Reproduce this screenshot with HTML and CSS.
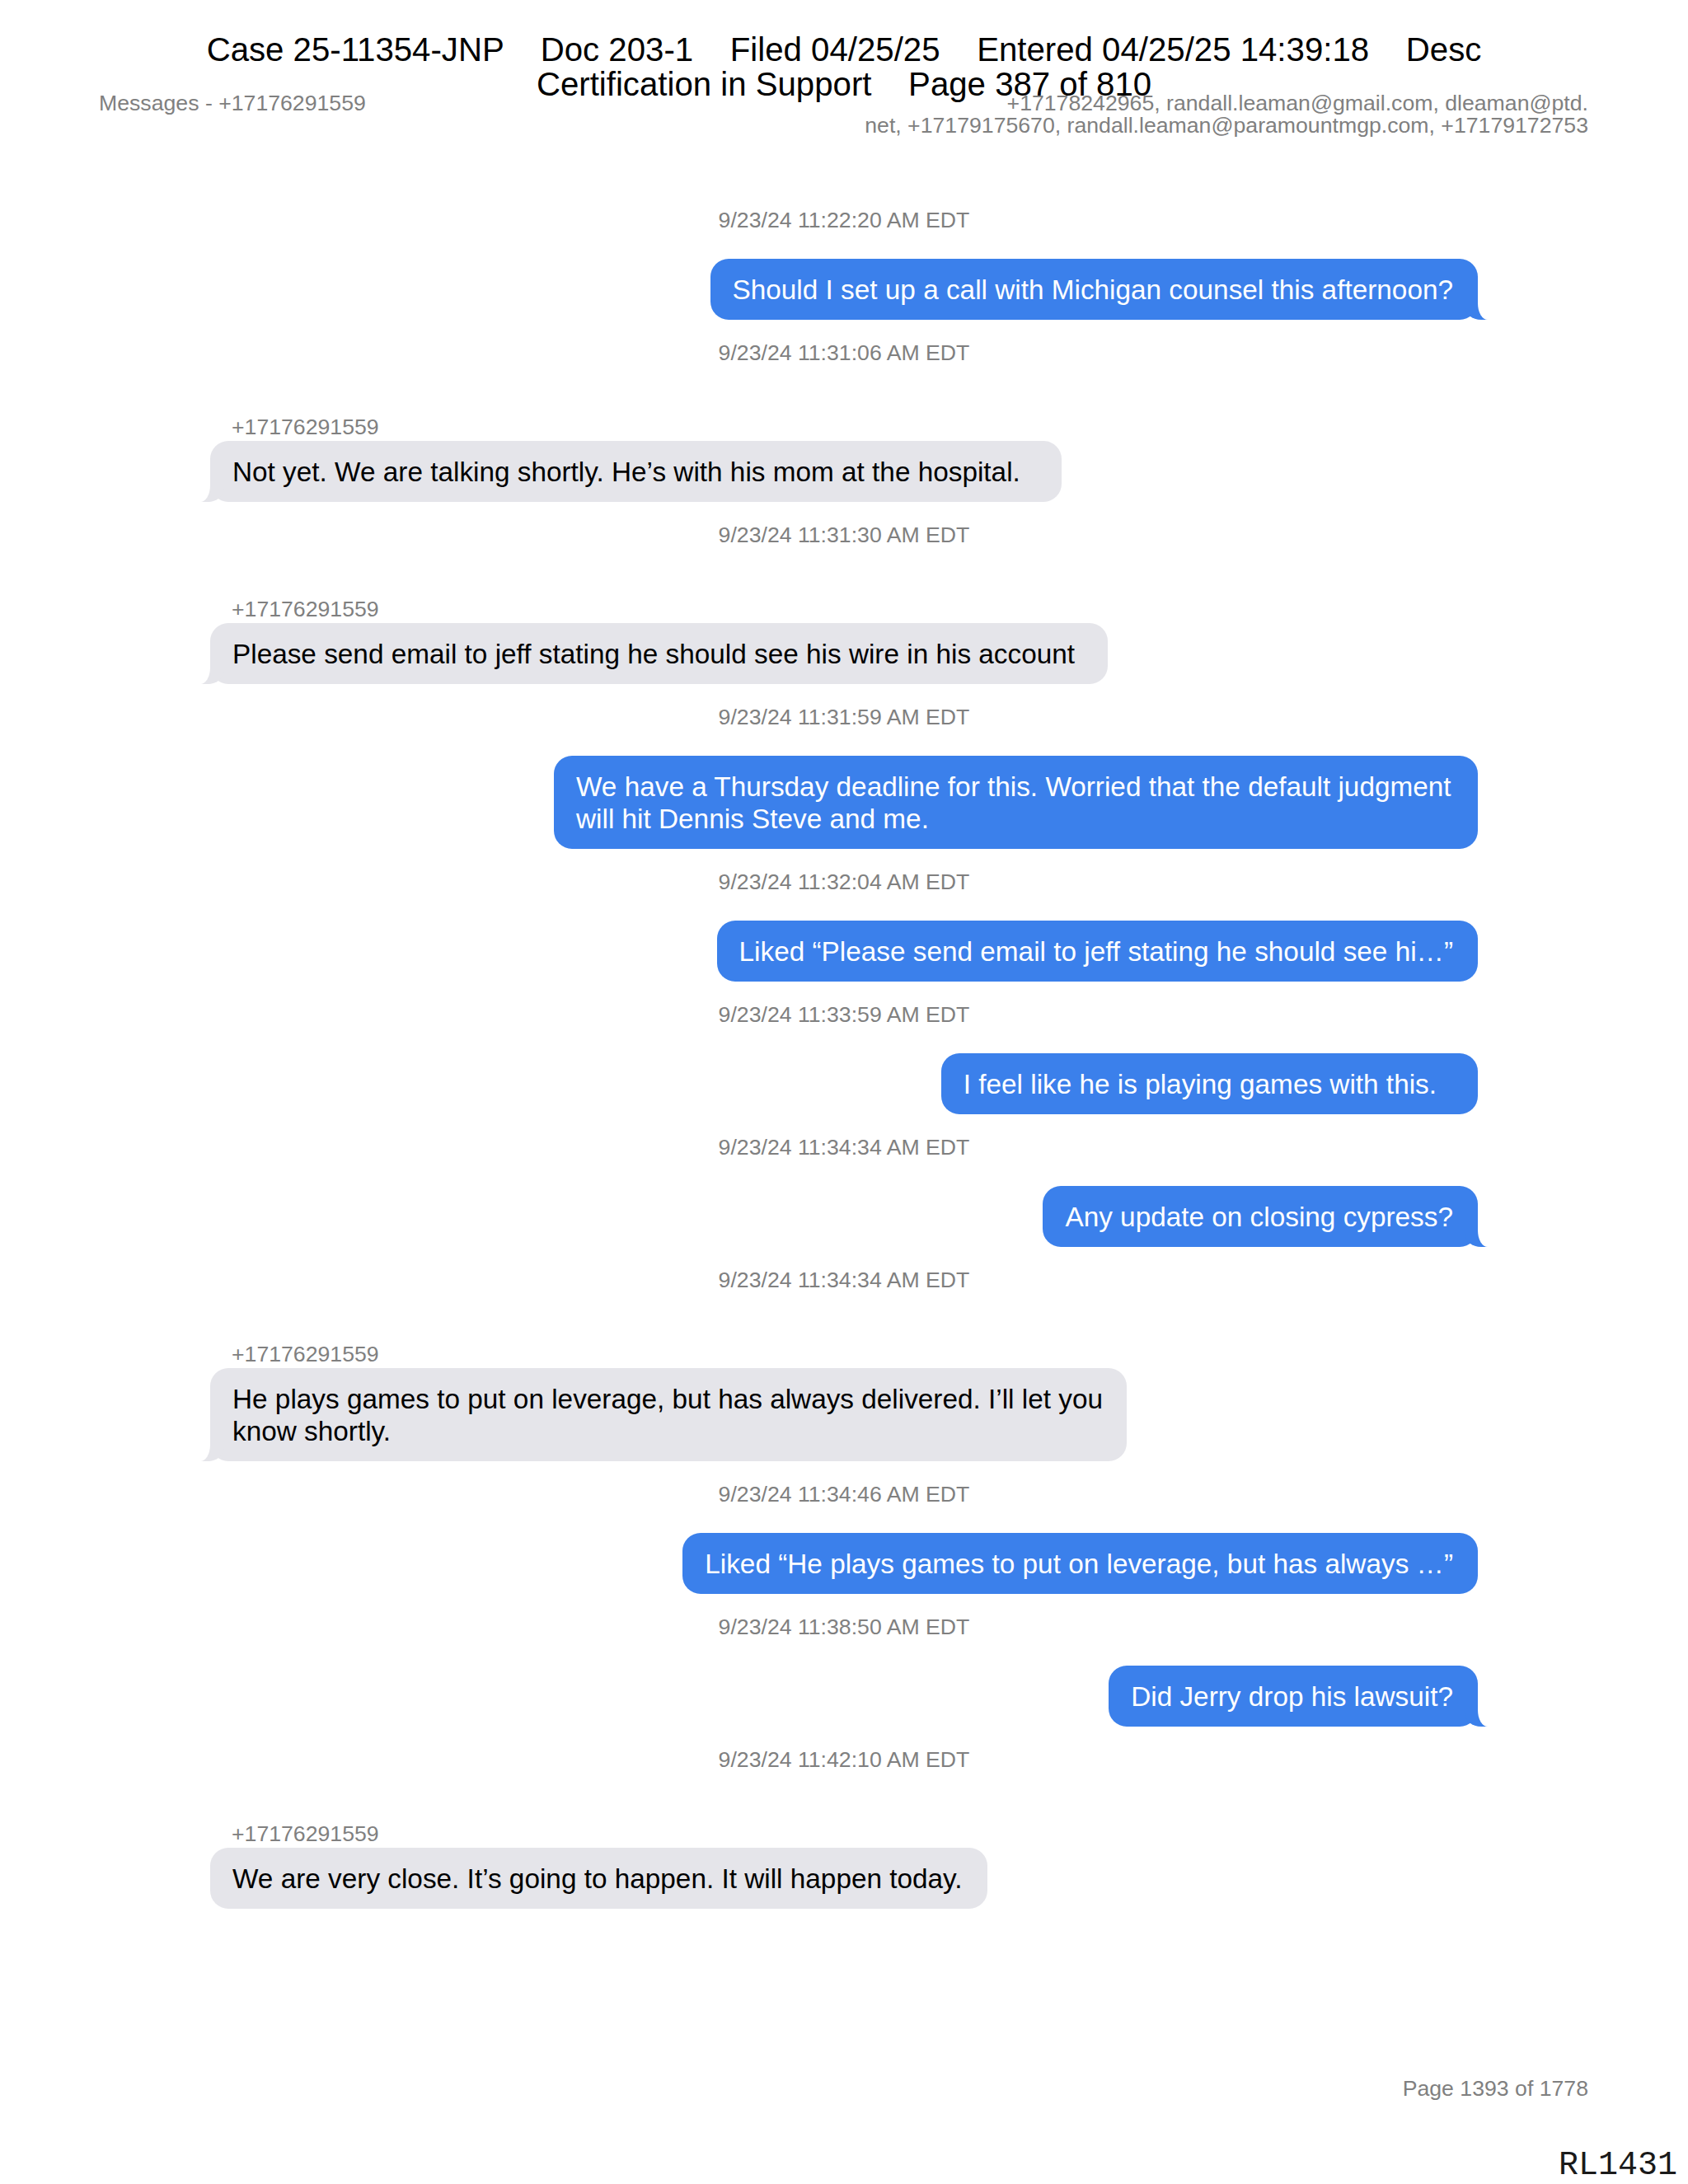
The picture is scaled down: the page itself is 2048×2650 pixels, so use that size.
FILE: index.html
```html
<!DOCTYPE html>
<html lang="en">
<head>
<meta charset="utf-8">
<title>Messages - +17176291559</title>
<link rel="stylesheet" href="styles.css">
</head>
<body>
<div class="page">
  <header class="doc-head">
    <div class="thread-title">Messages - +17176291559</div>
    <div class="participants">
      <div>+17178242965, randall.leaman@gmail.com, dleaman@ptd.</div>
      <div>net, +17179175670, randall.leaman@paramountmgp.com, +17179172753</div>
    </div>
  </header>

  <main class="thread">
    <div class="msg out">
      <div class="ts">9/23/24 11:22:20 AM EDT</div>
      <div class="bubble tail">Should I set up a call with Michigan counsel this afternoon?</div>
    </div>
    <div class="msg in">
      <div class="ts">9/23/24 11:31:06 AM EDT</div>
      <div class="sender">+17176291559</div>
      <div class="bubble tail loose">Not yet. We are talking shortly. He’s with his mom at the hospital.</div>
    </div>
    <div class="msg in">
      <div class="ts">9/23/24 11:31:30 AM EDT</div>
      <div class="sender">+17176291559</div>
      <div class="bubble tail roomy">Please send email to jeff stating he should see his wire in his account</div>
    </div>
    <div class="msg out">
      <div class="ts">9/23/24 11:31:59 AM EDT</div>
      <div class="bubble">We have a Thursday deadline for this. Worried that the default judgment will hit Dennis Steve and me.</div>
    </div>
    <div class="msg out">
      <div class="ts">9/23/24 11:32:04 AM EDT</div>
      <div class="bubble">Liked “Please send email to jeff stating he should see hi…”</div>
    </div>
    <div class="msg out">
      <div class="ts">9/23/24 11:33:59 AM EDT</div>
      <div class="bubble loose">I feel like he is playing games with this.</div>
    </div>
    <div class="msg out">
      <div class="ts">9/23/24 11:34:34 AM EDT</div>
      <div class="bubble tail">Any update on closing cypress?</div>
    </div>
    <div class="msg in">
      <div class="ts">9/23/24 11:34:34 AM EDT</div>
      <div class="sender">+17176291559</div>
      <div class="bubble tail snug">He plays games to put on leverage, but has always delivered. I’ll let you know shortly.</div>
    </div>
    <div class="msg out">
      <div class="ts">9/23/24 11:34:46 AM EDT</div>
      <div class="bubble">Liked “He plays games to put on leverage, but has always …”</div>
    </div>
    <div class="msg out">
      <div class="ts">9/23/24 11:38:50 AM EDT</div>
      <div class="bubble tail">Did Jerry drop his lawsuit?</div>
    </div>
    <div class="msg in">
      <div class="ts">9/23/24 11:42:10 AM EDT</div>
      <div class="sender">+17176291559</div>
      <div class="bubble">We are very close. It’s going to happen. It will happen today.</div>
    </div>
  </main>

  <footer class="page-num">Page 1393 of 1778</footer>

  <div class="court-stamp">Case 25-11354-JNP    Doc 203-1    Filed 04/25/25    Entered 04/25/25 14:39:18    Desc
Certification in Support    Page 387 of 810</div>

  <div class="bates">RL1431</div>
</div>
</body>
</html>
```

FILE: styles.css
```css
* {
  box-sizing: border-box;
}

html,
body {
  margin: 0;
  padding: 0;
  background: #ffffff;
}

body {
  font-family: "Liberation Sans", Arial, Helvetica, sans-serif;
}

.page {
  position: relative;
  width: 2048px;
  min-height: 2650px;
  display: flex;
  flex-direction: column;
  padding: 112px 121px 101px 120px;
}

/* ---------- export header ---------- */
.doc-head {
  display: flex;
  justify-content: space-between;
  align-items: flex-start;
  font-size: 26.67px;
  line-height: 26.5px;
  color: #808080;
}

.participants {
  text-align: right;
}

/* ---------- conversation ---------- */
.thread {
  display: flex;
  flex-direction: column;
  padding: 87px 134px 0 135px;
}

.msg {
  display: flex;
  flex-direction: column;
}

.ts {
  text-align: center;
  font-size: 26.67px;
  line-height: 30px;
  color: #808080;
}

.sender {
  margin-top: 60px;
  padding-left: 26px;
  font-size: 26.67px;
  line-height: 30px;
  color: #808080;
}

.bubble {
  position: relative;
  margin-top: 32px;
  margin-bottom: 25px;
  max-width: 1121px;
  padding: 17.5px 30px 17.5px 27px;
  border-radius: 22px;
  font-size: 33.33px;
  line-height: 39px;
}

.bubble.loose {
  padding-right: 50px;
}

.bubble.roomy {
  padding-right: 40px;
}

.bubble.snug {
  max-width: 1112px;
  padding-right: 22px;
}

.sender + .bubble {
  margin-top: 2px;
}

.out .bubble {
  align-self: flex-end;
  background: #3b80eb;
  color: #ffffff;
}

.in .bubble {
  align-self: flex-start;
  background: #e5e5ea;
  color: #000000;
}

/* bubble tails */
.bubble.tail::before,
.bubble.tail::after {
  content: "";
  position: absolute;
  bottom: 0;
}

.out .bubble.tail::before {
  right: -12px;
  width: 28px;
  height: 28px;
  background: #3b80eb;
  border-bottom-left-radius: 20px 16px;
}

.out .bubble.tail::after {
  right: -40px;
  width: 40px;
  height: 28px;
  background: #ffffff;
  border-bottom-left-radius: 12px 20px;
}

.in .bubble.tail::before {
  left: -11px;
  width: 28px;
  height: 28px;
  background: #e5e5ea;
  border-bottom-right-radius: 20px 16px;
}

.in .bubble.tail::after {
  left: -40px;
  width: 40px;
  height: 28px;
  background: #ffffff;
  border-bottom-right-radius: 12px 20px;
}

/* ---------- footer ---------- */
.page-num {
  margin-top: auto;
  text-align: right;
  font-size: 26.67px;
  line-height: 30px;
  color: #808080;
}

/* ---------- overlays: court filing stamp & bates number ---------- */
.court-stamp {
  position: absolute;
  top: 40px;
  left: 0;
  right: 0;
  text-align: center;
  white-space: pre;
  font-size: 40.2px;
  line-height: 42px;
  color: #000000;
}

.bates {
  position: absolute;
  left: 1891px;
  top: 2608px;
  font-family: "Liberation Mono", "Courier New", monospace;
  font-size: 40px;
  line-height: 40px;
  color: #1a1a1a;
}
```
